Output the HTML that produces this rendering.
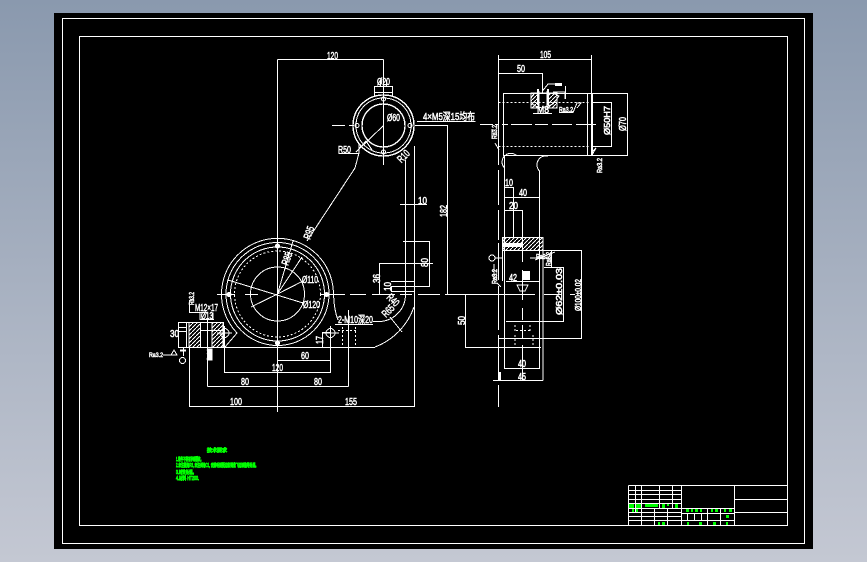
<!DOCTYPE html>
<html><head><meta charset="utf-8"><style>
html,body{margin:0;padding:0;width:867px;height:562px;overflow:hidden;background:linear-gradient(180deg,#8a99ae 0%,#c4c8d3 100%)}
svg{position:absolute;left:0;top:0;display:block}
text{font-family:"Liberation Sans Narrow","Liberation Sans","Noto Sans CJK SC",sans-serif;fill:#fff;stroke:#fff;stroke-width:.55;font-size:10.5px;shape-rendering:auto}
.g{fill:#0f0;stroke:#0f0;font-family:"Liberation Sans","Noto Sans CJK SC",sans-serif;font-size:5px;stroke-width:.9}
</style></head><body>
<svg width="867" height="562" viewBox="0 0 867 562" shape-rendering="crispEdges">
<defs><pattern id="h" width="4" height="4" patternUnits="userSpaceOnUse"><path d="M0 4L4 0" stroke="#fff" stroke-width="1"/></pattern>
<clipPath id="cb"><rect x="0" y="0" width="867" height="347"/></clipPath></defs>
<rect x="54" y="13" width="759" height="536" fill="#000"/>
<g fill="none" stroke="#fff" stroke-width="1">
<rect x="62.5" y="18.5" width="742" height="525"/>
<rect x="79.5" y="36.5" width="708" height="489"/>
<!-- title block -->
<path d="M628.5 485.5H787.5M628.5 485.5V525.5M681.5 485.5V525.5M734.5 485.5V525.5M628.5 490.5H681.5M628.5 494.5H681.5M628.5 499.5H681.5M628.5 503.5H681.5M628.5 508.5H734.5M628.5 512.5H681.5M628.5 516.5H681.5M628.5 520.5H681.5M635.5 485.5V512.5M641.5 485.5V525.5M659.5 485.5V508.5M672.5 485.5V508.5M654.5 508.5V525.5M667.5 508.5V525.5M681.5 513.5H734.5M681.5 520.5H734.5M687.5 513.5V520.5M694.5 513.5V520.5M701.5 513.5V520.5M707.5 508.5V525.5M720.5 508.5V525.5M734.5 499.5H787.5M734.5 512.5H787.5"/>
<!-- main dims -->
<path d="M277.5 59.5H383.5M277.5 59.5V412M383.5 59.5V165M189.5 347.5H375M189.5 347V406.5H414.5V300M207.5 386.5H348.5M207.5 352V386.5M348.5 310V386.5M224.5 333V372.5H330.5V333M277.5 360.5H330.5"/>
<path d="M417 121.5H475.5M415 125.5H447.5V294M359 153.5H338.5M359 143V153L355 168L307 241"/>
<path d="M405.5 160V294M414.5 146V307M400 204.5H427M403 241.5H429.5V286.5H391.5V291.5H414M391 281.5H415M379.5 294V263.5H433M335 324.5H373"/>
<path d="M374.5 86.5H392.5V92.5H374.5ZM374.5 92.5V97M392.5 92.5V97M380.5 86V80M386.5 86V80"/>
<!-- top circle -->
<circle cx="383.5" cy="125.5" r="30.5" stroke-width="1.4"/><circle cx="383.5" cy="125.5" r="27.5"/><circle cx="383.5" cy="125.5" r="21.5" stroke-width="1.4"/>
<circle cx="383.5" cy="99" r="2"/><circle cx="383.5" cy="152" r="2"/><circle cx="357" cy="125.5" r="2"/><circle cx="410" cy="125.5" r="2"/>
<path d="M383.5 92V160M383.5 125.5L356 152L366 141L372 150M332 125.5H345M349 125.5H354"/>
<!-- big circle -->
<g clip-path="url(#cb)"><path d="M333.5 294A56 56 0 1 0 237 333"/><path d="M237 333L225 347"/><circle cx="277.5" cy="294" r="51.5"/><circle cx="277.5" cy="294" r="47"/></g>
<circle cx="277.5" cy="294" r="43" stroke-dasharray="2 2"/>
<circle cx="277.5" cy="294" r="27"/>
<circle cx="277.5" cy="246" r="2" fill="#fff"/><circle cx="277.5" cy="343" r="2" fill="#fff"/><circle cx="229" cy="294.5" r="2" fill="#fff"/><circle cx="326.5" cy="294.5" r="2" fill="#fff"/>
<path d="M277.5 294L293 241M277.5 294L303 281M277.5 294L251 307M228 280L303 303M277.5 294L302 257" />
<path d="M217 294.5H235M245 294.5H258M320 294.5H345M350 294.5H366M372 294.5H395M400 294.5H412M418 294.5H440M445 294.5H454" />
<!-- arcs -->
<path d="M414 307A66 66 0 0 1 375 347" /><path d="M405.5 294A27 27 0 0 1 380 321.5H373"/>
<path d="M390 317L402 332M322.5 332V347M322.5 332.5H330"/>
<path d="M333.5 294Q334 310 338 320"/>
<circle cx="224.5" cy="333" r="4.5"/><circle cx="330.5" cy="333" r="4.5"/>
<path d="M217 333H232M224.5 326V340M323 333H339M330.5 326V340M348.5 310V347"/>
<path d="M342.5 327V347M355.5 327V347M338 330.5H356" stroke-dasharray="2 2"/>
<!-- left block -->
<rect x="178.5" y="322.5" width="45" height="25"/>
<rect x="189" y="322.5" width="11.5" height="25" fill="url(#h)"/><rect x="212" y="322.5" width="11" height="25" fill="url(#h)"/>
<path d="M186.5 322.5V347M178.5 327.5H187M178.5 331.5H187M200.5 322.5V347M212 322.5V347M200 330.5H224M189.5 300V312.5H207M207.5 320V352M183.5 347.5V356M163 355H171L174 350L177 355H171"/>
<circle cx="182.5" cy="360.5" r="3"/>
<path d="M180 350.5H186" stroke-width="2"/>
<rect x="208" y="349" width="4" height="11" fill="#fff"/>
<path d="M200 312.5V320M213 312.5V320M200 319.5H214"/>
<!-- right view -->
<path d="M498.5 59.5H591.5M498.5 55V160M591.5 55V155M498.5 73.5H542.5V93M503.5 93.5H627.5V155.5H503.5ZM587.5 93.5V155.5M592.5 93.5V155.5M592.5 102.5H611.5V146.5H592.5"/>
<path d="M498.5 102.5H590M498.5 146.5H590" stroke-dasharray="2 2"/>
<path d="M480 124.5H493M495 124.5H498M502 124.5H508M511 124.5H532M535 124.5H548M552 124.5H572M576 124.5H596"/>
<path d="M498.5 160V165M498.5 170V205M498.5 210V240M498.5 243V280M498.5 286V330M498.5 335V380M498.5 385V407"/>
<path d="M504.5 155.5V281M539.5 171V281M539.5 171A9 9 0 0 1 548 156M504.5 168A8 8 0 0 1 517 156M504.5 187.5H513.5V238M504.5 197.5H539.5M504.5 210.5H522.5V238"/>
<path d="M531 102A15 15 0 0 0 535 106L542 108L553 104L559 96L553 93H535L531 98Z"/>
<rect x="531" y="93" width="8" height="15" fill="url(#h)"/><rect x="547" y="93" width="10" height="15" fill="url(#h)"/>
<path d="M539 91V106M547 91V106M533 113.5H552M542.5 91L548 84H562M553 92H565V99M565.5 86V99M559 112.5H573L577 103H581L577 108"/>
<path d="M492 129V139M495 143L499 150M596 148L592 155M592 152L596 148"/>
<!-- lower -->
<rect x="503" y="237.5" width="40" height="13" fill="url(#h)"/>
<path d="M503 237.5H543V380.5M502.5 237V281M503 250.5H581.5V338.5H498M551.5 250.5V267.5M544 267.5H563.5V321.5H506M506 281.5H539.5M465.5 294.5V347.5H541M450 294.5H535M544 294.5H562M570 294.5H575M504.5 281V368.5H539.5V281M493 380.5H543"/>
<path d="M515 335V347M533 335V347M516 330.5H530M515 325V332M530 325V332" stroke-dasharray="2 2"/>
<path d="M522.5 215V224M522.5 228V262M522.5 270V300M522.5 308V320M522.5 325V338M522.5 345V380"/>
<path d="M517 285L528 285L525 291H520Z"/>
<path d="M555 252L535 260M530 258H546"/>
<circle cx="492" cy="258" r="3"/>
<path d="M495 258H502M494 264V280M497 283L501 287"/>
</g>
<!-- solid blobs -->
<g fill="#fff">
<rect x="537" y="89" width="2" height="16"/><rect x="547" y="89" width="2" height="16"/>
<rect x="555" y="83" width="7" height="3"/>
<rect x="522" y="271" width="8" height="9"/>
<rect x="503" y="243" width="19" height="4"/><rect x="498" y="372" width="3" height="9"/>
</g>
<!-- dimension text -->
<g text-anchor="start">
<text x="327" y="59" textLength="11" lengthAdjust="spacingAndGlyphs">120</text>
<text x="377" y="85" textLength="13" lengthAdjust="spacingAndGlyphs">Ø20</text>
<text x="387" y="121" textLength="13" lengthAdjust="spacingAndGlyphs">Ø60</text>
<text x="423" y="120" textLength="52" lengthAdjust="spacingAndGlyphs">4×M5深15均布</text>
<text x="338" y="153" textLength="13" lengthAdjust="spacingAndGlyphs">R50</text>
<text x="418" y="204" textLength="9" lengthAdjust="spacingAndGlyphs">10</text>
<text x="302" y="283" textLength="16" lengthAdjust="spacingAndGlyphs">Ø110</text>
<text x="303" y="308" textLength="17" lengthAdjust="spacingAndGlyphs">Ø120</text>
<text x="338" y="323" textLength="35" lengthAdjust="spacingAndGlyphs">2-M10深20</text>
<text x="195" y="311" textLength="23" lengthAdjust="spacingAndGlyphs">M12×17</text>
<text x="201" y="319" textLength="12" lengthAdjust="spacingAndGlyphs">Ø13</text>
<text x="170" y="337" textLength="9" lengthAdjust="spacingAndGlyphs">30</text>
<text x="301" y="359" textLength="8" lengthAdjust="spacingAndGlyphs">60</text>
<text x="272" y="371" textLength="11" lengthAdjust="spacingAndGlyphs">120</text>
<text x="241" y="385" textLength="8" lengthAdjust="spacingAndGlyphs">80</text>
<text x="314" y="385" textLength="8" lengthAdjust="spacingAndGlyphs">80</text>
<text x="230" y="405" textLength="12" lengthAdjust="spacingAndGlyphs">100</text>
<text x="345" y="405" textLength="12" lengthAdjust="spacingAndGlyphs">155</text>
<text x="540" y="58" textLength="11" lengthAdjust="spacingAndGlyphs">105</text>
<text x="517" y="72" textLength="8" lengthAdjust="spacingAndGlyphs">50</text>
<text x="537" y="113" textLength="12" lengthAdjust="spacingAndGlyphs">M8</text>
<text x="505" y="186" textLength="8" lengthAdjust="spacingAndGlyphs">10</text>
<text x="519" y="196" textLength="8" lengthAdjust="spacingAndGlyphs">40</text>
<text x="509" y="209" textLength="9" lengthAdjust="spacingAndGlyphs">20</text>
<text x="509" y="281" textLength="8" lengthAdjust="spacingAndGlyphs">42</text>
<text x="518" y="367" textLength="8" lengthAdjust="spacingAndGlyphs">40</text>
<text x="518" y="380" textLength="8" lengthAdjust="spacingAndGlyphs">45</text>
<text x="149" y="357" textLength="14" style="font-size:6px" lengthAdjust="spacingAndGlyphs">Ra3.2</text>
<text x="559" y="112" textLength="14" style="font-size:7px" lengthAdjust="spacingAndGlyphs">Ra3.2</text>
<text x="536" y="259" textLength="14" style="font-size:7px" lengthAdjust="spacingAndGlyphs">Ra3.2</text>
<text transform="translate(447,217) rotate(-90)" textLength="12" lengthAdjust="spacingAndGlyphs">182</text>
<text transform="translate(407,152) rotate(-45)" x="-12" y="4" textLength="13" lengthAdjust="spacingAndGlyphs">R10</text>
<text transform="translate(310,240) rotate(-70)" textLength="13" lengthAdjust="spacingAndGlyphs">R95</text>
<text transform="translate(288,266) rotate(-70)" textLength="13" lengthAdjust="spacingAndGlyphs">R85</text>
<text transform="translate(380,283) rotate(-90)" textLength="9" lengthAdjust="spacingAndGlyphs">36</text>
<text transform="translate(428,267) rotate(-90)" textLength="9" lengthAdjust="spacingAndGlyphs">80</text>
<text transform="translate(391,291) rotate(-90)" textLength="9" lengthAdjust="spacingAndGlyphs">10</text>
<text transform="translate(386,298) rotate(45)" textLength="13" lengthAdjust="spacingAndGlyphs">R40</text>
<text transform="translate(386,318) rotate(-45)" textLength="13" lengthAdjust="spacingAndGlyphs">R65</text>
<text transform="translate(323,344) rotate(-90)" textLength="8" lengthAdjust="spacingAndGlyphs">17</text>
<text transform="translate(465,325) rotate(-90)" textLength="9" lengthAdjust="spacingAndGlyphs">50</text>
<text transform="translate(610,135) rotate(-90)" style="font-size:8px" textLength="29" lengthAdjust="spacingAndGlyphs">Ø50H7</text>
<text transform="translate(626,131) rotate(-90)" textLength="14" lengthAdjust="spacingAndGlyphs">Ø70</text>
<text transform="translate(562,315) rotate(-90)" style="font-size:8px" textLength="47" lengthAdjust="spacingAndGlyphs">Ø62±0.03</text>
<text transform="translate(581,311) rotate(-90)" style="font-size:8px" textLength="32" lengthAdjust="spacingAndGlyphs">Ø100±0.02</text>
<text transform="translate(551,266) rotate(-90)" style="font-size:7px" textLength="14" lengthAdjust="spacingAndGlyphs">Ra3.2</text>
<text transform="translate(194,305) rotate(-90)" style="font-size:7px" textLength="13" lengthAdjust="spacingAndGlyphs">Ra3.2</text>
<text transform="translate(497,139) rotate(-90)" style="font-size:7px" textLength="14" lengthAdjust="spacingAndGlyphs">Ra3.2</text>
<text transform="translate(602,173) rotate(-90)" style="font-size:7px" textLength="15" lengthAdjust="spacingAndGlyphs">Ra3.2</text>
<text transform="translate(497,284) rotate(-90)" style="font-size:7px" textLength="15" lengthAdjust="spacingAndGlyphs">Ra3.2</text>
<text transform="translate(212,360) rotate(-90)" style="font-size:7px" textLength="11" lengthAdjust="spacingAndGlyphs">Ra3.2</text>
</g>
<!-- green notes -->
<g>
<text class="g" x="207" y="452" textLength="20" lengthAdjust="spacingAndGlyphs" style="font-size:5px">技术要求</text>
<text class="g" x="176" y="461" textLength="27" lengthAdjust="spacingAndGlyphs">1.铸件不得有砂眼裂纹。</text>
<text class="g" x="176" y="467" textLength="82" lengthAdjust="spacingAndGlyphs">2.未注圆角R3, 未注倒角C1, 去除毛刺锐边和铸造飞边缺陷等处理。</text>
<text class="g" x="176" y="474" textLength="20" lengthAdjust="spacingAndGlyphs">3.时效处理。</text>
<text class="g" x="176" y="480" textLength="23" lengthAdjust="spacingAndGlyphs">4.材料 HT200.</text>
</g>
<g fill="#0f0">
<rect x="629" y="504" width="5" height="4"/><rect x="636" y="504" width="5" height="4"/><rect x="645" y="504" width="13" height="3"/><rect x="662" y="504" width="3" height="4"/><rect x="667" y="504" width="2" height="2"/><rect x="675" y="504" width="3" height="4"/>
<rect x="632" y="509" width="2" height="3"/><rect x="636" y="509" width="2" height="3"/>
<rect x="686" y="509" width="3" height="3"/><rect x="691" y="509" width="2" height="3"/><rect x="695" y="509" width="3" height="3"/><rect x="700" y="509" width="2" height="3"/><rect x="711" y="509" width="2" height="3"/><rect x="715" y="509" width="3" height="3"/><rect x="724" y="509" width="2" height="3"/><rect x="729" y="509" width="3" height="3"/>
<rect x="726" y="515" width="3" height="3"/>
<rect x="658" y="522" width="2" height="3"/><rect x="662" y="522" width="3" height="3"/><rect x="687" y="522" width="2" height="3"/><rect x="699" y="522" width="3" height="3"/><rect x="713" y="522" width="3" height="3"/><rect x="726" y="522" width="2" height="3"/>
</g>
</svg>
</body></html>
